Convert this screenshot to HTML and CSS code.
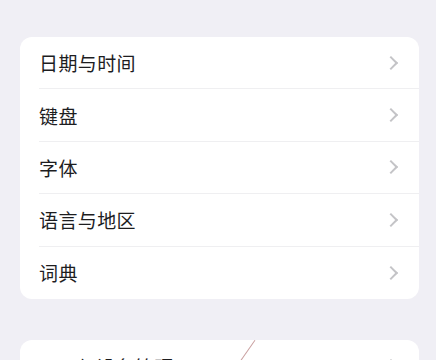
FILE: index.html
```html
<!DOCTYPE html>
<html lang="zh-CN">
<head>
    <meta charset="UTF-8">
    <meta name="viewport" content="width=device-width, initial-scale=1.0">
    <title>通用</title>
    <link rel="stylesheet" href="styles.css">
</head>
<body>
    <div class="page">
        <div class="group">
            <div class="row"><span class="label">日期与时间</span><span class="chevron"></span></div>
            <div class="row"><span class="label">键盘</span><span class="chevron"></span></div>
            <div class="row"><span class="label">字体</span><span class="chevron"></span></div>
            <div class="row"><span class="label">语言与地区</span><span class="chevron"></span></div>
            <div class="row"><span class="label">词典</span><span class="chevron"></span></div>
        </div>

        <div class="group">
            <div class="row"><span class="label">VPN与设备管理</span><span class="chevron"></span></div>
        </div>
    </div>
    <div class="stroke"></div>
</body>
</html>
```

FILE: styles.css
```css
body {
    margin: 0;
    padding: 0;
    background-color: #f0eff5;
    font-family: "Noto Sans CJK SC", "Noto Sans", sans-serif;
    height: 360px;
    overflow: hidden;
    position: relative;
}
.page {
    padding: 37px 17px 0 20px;
    display: flex;
    flex-direction: column;
    gap: 41px;
}
.group {
    background-color: #fff;
    border-radius: 12px;
    padding-left: 19px;
}
.row {
    height: 52.4px;
    box-sizing: border-box;
    display: flex;
    align-items: center;
    justify-content: space-between;
    padding-right: 20px;
    border-bottom: 1px solid #efeff1;
}
.row:last-child {
    border-bottom: none;
}
.label {
    font-size: 19px;
    color: #1d1d1f;
    letter-spacing: 0.4px;
}
.chevron {
    width: 8px;
    height: 8px;
    border-top: 2px solid #c4c4c7;
    border-right: 2px solid #c4c4c7;
    transform: rotate(45deg);
    margin-right: 3px;
}
.stroke {
    position: absolute;
    left: 247px;
    top: 338px;
    width: 1.2px;
    height: 26px;
    background-color: #c9a0a0;
    transform: rotate(35deg);
}
```
